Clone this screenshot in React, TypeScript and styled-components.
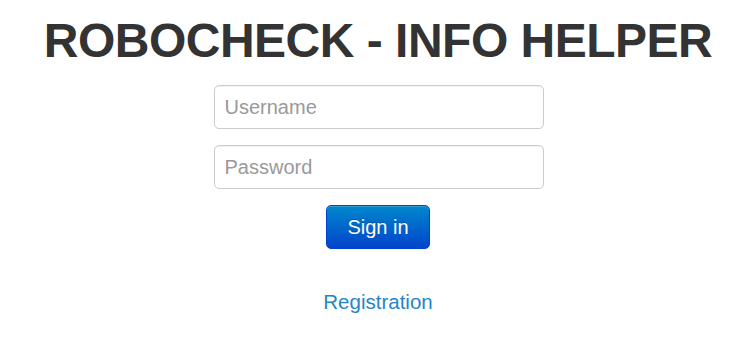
import React from 'react';
import styled, { createGlobalStyle } from 'styled-components';

const GlobalStyle = createGlobalStyle`
  html, body {
    margin: 0;
    padding: 0;
    background: #fff;
  }
  body {
    font-family: 'Liberation Sans', Arial, sans-serif;
  }
`;

const Page = styled.main`
  display: flex;
  flex-direction: column;
  align-items: center;
  width: 756px;
  padding-top: 14px;
`;

const Title = styled.h1`
  margin: 0 0 18px;
  font-size: 48px;
  line-height: 53px;
  font-weight: 700;
  letter-spacing: -0.5px;
  color: #333;
  text-align: center;
  white-space: nowrap;
`;

const Form = styled.form`
  display: flex;
  flex-direction: column;
  align-items: center;
  gap: 16px;
  margin: 0;
`;

const Field = styled.input`
  box-sizing: border-box;
  width: 330px;
  height: 44px;
  margin: 0 0 0 1px;
  padding: 0 10px;
  border: 1px solid #ccc;
  border-radius: 5px;
  background: #fff;
  box-shadow: inset 0 1px 1px rgba(0, 0, 0, 0.06);
  font-family: 'Liberation Sans', Arial, sans-serif;
  font-size: 20px;
  color: #555;
  outline: none;

  &::placeholder {
    color: #999;
  }
`;

const SignInButton = styled.button`
  box-sizing: border-box;
  width: 104px;
  height: 44px;
  margin: 0;
  padding: 0;
  border: 1px solid #0044cc;
  border-radius: 5px;
  background: linear-gradient(to bottom, #0088cc, #0044cc);
  box-shadow: inset 0 1px 0 rgba(255, 255, 255, 0.2), 0 1px 2px rgba(0, 0, 0, 0.05);
  color: #fff;
  font-family: 'Liberation Sans', Arial, sans-serif;
  font-size: 20px;
  text-shadow: 0 -1px 0 rgba(0, 0, 0, 0.25);
  cursor: pointer;
`;

const RegisterLink = styled.a`
  margin-top: 41px;
  font-size: 20.5px;
  line-height: 24px;
  color: #2585c5;
  text-decoration: none;
`;

export default function App() {
  return (
    <>
      <GlobalStyle />
      <Page>
        <Title>ROBOCHECK - INFO HELPER</Title>
        <Form onSubmit={(e) => e.preventDefault()}>
          <Field type="text" placeholder="Username" />
          <Field type="password" placeholder="Password" />
          <SignInButton type="submit">Sign in</SignInButton>
        </Form>
        <RegisterLink href="#">Registration</RegisterLink>
      </Page>
    </>
  );
}
